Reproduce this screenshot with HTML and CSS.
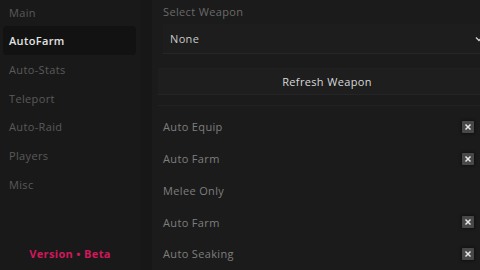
FILE: index.html
```html
<!DOCTYPE html>
<html>
<head>
<meta charset="utf-8">
<link rel="stylesheet" href="styles.css">
</head>
<body>
<div class="app">
  <aside class="sidebar">
    <nav class="nav">
      <div class="nav-item">Main</div>
      <div class="nav-item active">AutoFarm</div>
      <div class="nav-item">Auto-Stats</div>
      <div class="nav-item">Teleport</div>
      <div class="nav-item">Auto-Raid</div>
      <div class="nav-item">Players</div>
      <div class="nav-item">Misc</div>
    </nav>
    <div class="version">Version • Beta</div>
  </aside>
  <main class="content">
    <div class="label">Select Weapon</div>
    <div class="dropdown">
      <span class="dd-value">None</span>
      <svg class="chev" width="8" height="6" viewBox="0 0 8 6"><path d="M1 1.5 L4 4.5 L7 1.5" fill="none" stroke="#cfcfcf" stroke-width="1.4"/></svg>
    </div>
    <div class="button">Refresh Weapon</div>
    <div class="sep"></div>
    <div class="row first"><span>Auto Equip</span><span class="check"><svg width="8" height="8" viewBox="0 0 8 8"><path d="M1.5 1.5 L6.5 6.5 M6.5 1.5 L1.5 6.5" stroke="#e6e6e6" stroke-width="1.5"/></svg></span></div>
    <div class="row"><span>Auto Farm</span><span class="check"><svg width="8" height="8" viewBox="0 0 8 8"><path d="M1.5 1.5 L6.5 6.5 M6.5 1.5 L1.5 6.5" stroke="#e6e6e6" stroke-width="1.5"/></svg></span></div>
    <div class="row"><span>Melee Only</span></div>
    <div class="row"><span>Auto Farm</span><span class="check"><svg width="8" height="8" viewBox="0 0 8 8"><path d="M1.5 1.5 L6.5 6.5 M6.5 1.5 L1.5 6.5" stroke="#e6e6e6" stroke-width="1.5"/></svg></span></div>
    <div class="row"><span>Auto Seaking</span><span class="check"><svg width="8" height="8" viewBox="0 0 8 8"><path d="M1.5 1.5 L6.5 6.5 M6.5 1.5 L1.5 6.5" stroke="#e6e6e6" stroke-width="1.5"/></svg></span></div>
  </main>
</div>
</body>
</html>
```
FILE: styles.css
```css
html, body {
  margin: 0;
  padding: 0;
  background: #1b1b1b;
  width: 480px;
  height: 270px;
  overflow: hidden;
  font-family: "Open Sans", "Noto Sans", sans-serif;
  font-size: 11px;
  letter-spacing: 0.35px;
}
.app {
  display: flex;
  width: 480px;
  height: 270px;
  overflow: hidden;
}
.sidebar {
  width: 140px;
  flex: none;
  background: #191919;
  border-right: 12px solid #171717;
  display: flex;
  flex-direction: column;
}
.nav {
  display: flex;
  flex-direction: column;
  padding: 0 4px 0 3px;
}
.nav-item {
  height: 28.7px;
  line-height: 29px;
  padding-left: 6px;
  color: #5a5a5a;
  border-radius: 4px;
}
.nav-item:first-child {
  height: 26px;
  line-height: 26px;
}
.nav-item.active {
  background: #121212;
  color: #e2e2e2;
  font-weight: 600;
  height: 29px;
  line-height: 29px;
}
.version {
  margin-top: auto;
  text-align: center;
  color: #d0185a;
  font-weight: 700;
  padding-bottom: 9px;
}
.content {
  flex: 1;
  display: flex;
  flex-direction: column;
  padding-left: 6px;
  min-width: 0;
}
.label {
  color: #6a6a6a;
  padding-left: 5px;
  height: 24px;
  line-height: 24px;
}
.dropdown {
  margin-left: 5px;
  height: 29px;
  background: #1d1d1d;
  border-bottom: 1px solid #262626;
  display: flex;
  align-items: center;
  justify-content: space-between;
  padding: 0 0 0 7px;
  color: #c8c8c8;
  font-weight: 500;
}
.chev { margin-right: -3px; }
.button {
  margin-top: 14px;
  margin-right: -16px;
  height: 25px;
  line-height: 25px;
  background: #1e1e1e;
  border-top: 1px solid #202020;
  border-bottom: 1px solid #252525;
  text-align: center;
  color: #d8d8d8;
  font-weight: 500;
}
.sep {
  height: 1px;
  background: #222;
  margin-top: 10px;
}
.row {
  height: 31.75px;
  display: flex;
  align-items: center;
  justify-content: space-between;
  padding: 0 6px 0 5px;
  color: #7e7e7e;
}
.row.first { margin-top: 5px; }
.check {
  width: 12px;
  height: 12px;
  background: #484848;
  border-radius: 1px;
  box-shadow: 0 0 3px 1px #111;
  display: flex;
  align-items: center;
  justify-content: center;
}
```
